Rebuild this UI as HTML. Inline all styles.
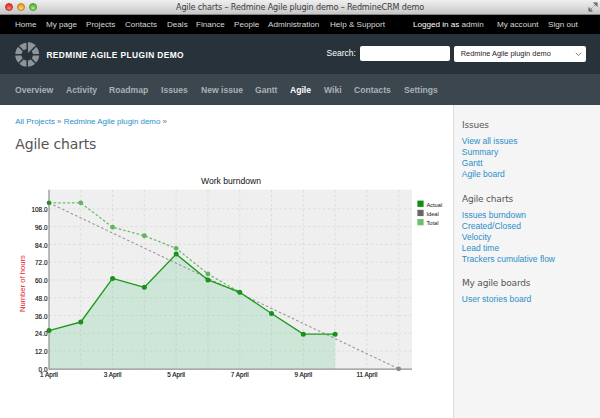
<!DOCTYPE html>
<html><head><meta charset="utf-8"><title>Agile charts – Redmine Agile plugin demo – RedmineCRM demo</title>
<style>
*{box-sizing:border-box;margin:0;padding:0}
html,body{width:600px;height:418px;overflow:hidden;background:#fff;font-family:"Liberation Sans",sans-serif;}
#titlebar{position:absolute;left:0;top:0;width:600px;height:15px;background:linear-gradient(#efefef,#dedede 45%,#c6c6c6);border-bottom:1px solid #858585;border-radius:2.5px 2.5px 0 0;}
#titlebar .t{position:absolute;left:0;width:600px;top:1.3px;text-align:center;font-family:"DejaVu Sans","Liberation Sans",sans-serif;font-size:8.1px;letter-spacing:-0.16px;color:#3c3c3c;line-height:13px;}
.tl{position:absolute;top:3px;width:8px;height:8px;border-radius:50%;}
#topmenu{position:absolute;left:0;top:15px;width:600px;height:19px;background:#000;color:#fff;font-size:8.1px;line-height:19px;}
#topmenu a{position:absolute;color:#d8d8d8;text-decoration:none;white-space:nowrap}
#header{position:absolute;left:0;top:34px;width:600px;height:40px;background:#28323a;}
#header h1{position:absolute;left:46.4px;top:14px;font-size:8.4px;font-weight:bold;color:#fff;letter-spacing:0.4px;line-height:14px;white-space:nowrap}
#mainmenu{position:absolute;left:0;top:74px;width:600px;height:31px;padding-top:1px;background:#3b464e;font-size:8.6px;font-weight:bold;line-height:30px;}
#mainmenu a{position:absolute;color:#a9b1b7;white-space:nowrap}
#mainmenu a.sel{color:#fff}
#sidebar{position:absolute;left:453px;top:105px;width:147px;height:313px;background:#f5f5f5;border-left:1px solid #dcdcdc;}
#sidebar h3{position:absolute;left:8px;font-family:"DejaVu Sans","Liberation Sans",sans-serif;font-weight:normal;font-size:9px;letter-spacing:-0.2px;color:#555;line-height:12px;white-space:nowrap}
#sidebar a{position:absolute;left:7.8px;font-size:8.5px;color:#2a8fc9;line-height:11px;white-space:nowrap}
#content{position:absolute;left:0;top:105px;width:453px;height:313px;}
.bc{position:absolute;left:15.2px;top:11px;font-size:7.95px;color:#2a8fc9;line-height:12px;white-space:nowrap}
.bc span{color:#777}
h2{position:absolute;left:15.3px;top:28.6px;font-family:"DejaVu Sans","Liberation Sans",sans-serif;font-weight:normal;font-size:14px;letter-spacing:-0.18px;color:#555;line-height:20px;white-space:nowrap}
</style></head><body>
<div id="titlebar">
<div class="tl" style="left:5px;background:radial-gradient(circle at 50% 75%,#ff8a80 0%,#e8443c 55%,#c9302a 100%);border:0.5px solid #b6312c"></div>
<div class="tl" style="left:17px;background:radial-gradient(circle at 50% 75%,#ffd77a 0%,#eeab35 55%,#d28f22 100%);border:0.5px solid #b98527"></div>
<div class="tl" style="left:29px;background:radial-gradient(circle at 50% 75%,#b5ea95 0%,#6cc04a 55%,#4da332 100%);border:0.5px solid #4a9833"></div>
<svg style="position:absolute;left:588px;top:2px" width="10" height="10" viewBox="0 0 10 10"><path d="M5.6 0.8H9.2V4.4ZM0.8 5.6V9.2H4.4ZM7.8 2.2L5.6 4.4M2.2 7.8L4.4 5.6" fill="#707070" stroke="#707070" stroke-width="0.8"/></svg>
<div class="t">Agile charts – Redmine Agile plugin demo – RedmineCRM demo</div>
</div>
<div id="topmenu">
<a style="left:15px">Home</a><a style="left:46px">My page</a><a style="left:86px">Projects</a><a style="left:125px">Contacts</a><a style="left:167px">Deals</a><a style="left:196px">Finance</a><a style="left:234px">People</a><a style="left:268px">Administration</a><a style="left:330px">Help &amp; Support</a>
<a style="left:413px;color:#fff">Logged in as <span style="color:#d8d8d8">admin</span></a><a style="left:497px">My account</a><a style="left:548px">Sign out</a>
</div>
<div id="header">
<svg style="position:absolute;left:15.4px;top:7.2px" width="28" height="28" viewBox="0 0 28 28"><circle cx="12.2" cy="13.8" r="8.9" fill="none" stroke="#8d949a" stroke-width="6.2"/><path d="M12.65 12.69L12.20 0.90A12.9 12.9 0 0 1 21.32 4.68Z" fill="#8d949a"/><path d="M12.20 13.80L12.20 -1.20M12.20 13.80L22.81 3.19M12.20 13.80L27.20 13.80M12.20 13.80L22.81 24.41M12.20 13.80L12.20 28.80M12.20 13.80L1.59 24.41M12.20 13.80L-2.80 13.80M12.20 13.80L1.59 3.19" stroke="#28323a" stroke-width="1.5" fill="none"/><circle cx="12.2" cy="13.8" r="1.2" fill="#28323a"/></svg>
<h1>REDMINE AGILE PLUGIN DEMO</h1>
<div style="position:absolute;left:326.6px;top:11.6px;font-size:8.5px;color:#fff;line-height:14px">Search:</div>
<div style="position:absolute;left:360px;top:11.6px;width:89.8px;height:15.8px;background:#fff;border-radius:2px"></div>
<div style="position:absolute;left:454.2px;top:11.5px;width:132px;height:16.2px;background:#fff;border-radius:2px;font-size:7.4px;line-height:16.2px;color:#222;padding-left:6.6px">Redmine Agile plugin demo<svg style="position:absolute;left:121px;top:6.2px" width="7" height="5" viewBox="0 0 7 5"><path d="M0.8 0.8L3.5 3.6L6.2 0.8" fill="none" stroke="#777" stroke-width="0.9"/></svg></div>
</div>
<div id="mainmenu">
<a style="left:15px">Overview</a><a style="left:66px">Activity</a><a style="left:109px">Roadmap</a><a style="left:161px">Issues</a><a style="left:201px">New issue</a><a style="left:255px">Gantt</a><a class="sel" style="left:290px">Agile</a><a style="left:324px">Wiki</a><a style="left:354px">Contacts</a><a style="left:404px">Settings</a>
</div>
<div id="content" style="top:0;height:418px">
<svg id="chart" style="position:absolute;left:0;top:0" width="453" height="418" viewBox="0 0 453 418" font-family="Liberation Sans, sans-serif">
<rect x="49.0" y="189.7" width="363.0" height="179.10000000000002" fill="#efefef"/>
<path d="M80.79 189.7V368.8M112.58 189.7V368.8M144.37 189.7V368.8M176.16 189.7V368.8M207.95 189.7V368.8M239.74 189.7V368.8M271.53 189.7V368.8M303.32 189.7V368.8M335.11 189.7V368.8M366.9 189.7V368.8M398.69 189.7V368.8M49.0 351.02H412.0M49.0 333.24H412.0M49.0 315.46H412.0M49.0 297.68H412.0M49.0 279.9H412.0M49.0 262.12H412.0M49.0 244.34H412.0M49.0 226.56H412.0M49.0 208.78H412.0" stroke="#d6d6d6" stroke-width="0.7" stroke-dasharray="2.4 2.4" fill="none"/>
<polygon points="49.0,368.8 49.0,330.57 80.79,321.98 112.58,278.42 144.37,287.31 176.16,254.12 207.95,279.9 239.74,292.2 271.53,313.53 303.32,334.13 335.11,334.13 335.11,368.8" fill="#28be64" fill-opacity="0.17"/>
<path d="M49.0 189.7V369.1H412.0" stroke="#909090" stroke-width="1.2" fill="none"/>
<path d="M49.0 202.85L398.69 368.8" stroke="#999" stroke-width="1.1" stroke-dasharray="2.6 2.2" fill="none"/>
<circle cx="398.69" cy="368.8" r="2.4" fill="#8a8a8a"/>
<polyline points="49.0,202.85 80.79,202.85 112.58,227.15 144.37,235.75 176.16,248.34 207.95,273.97 239.74,292.2" stroke="#6cbd6c" stroke-width="1.3" stroke-dasharray="2.6 2" fill="none"/>
<circle cx="49.0" cy="202.85" r="2.4" fill="#5fb55f"/>
<circle cx="80.79" cy="202.85" r="2.4" fill="#5fb55f"/>
<circle cx="112.58" cy="227.15" r="2.4" fill="#5fb55f"/>
<circle cx="144.37" cy="235.75" r="2.4" fill="#5fb55f"/>
<circle cx="176.16" cy="248.34" r="2.4" fill="#5fb55f"/>
<circle cx="207.95" cy="273.97" r="2.4" fill="#5fb55f"/>
<polyline points="49.0,330.57 80.79,321.98 112.58,278.42 144.37,287.31 176.16,254.12 207.95,279.9 239.74,292.2 271.53,313.53 303.32,334.13 335.11,334.13" stroke="#1f9a1f" stroke-width="1.35" fill="none" stroke-linejoin="round"/>
<circle cx="49.0" cy="330.57" r="2.5" fill="#189318"/>
<circle cx="80.79" cy="321.98" r="2.5" fill="#189318"/>
<circle cx="112.58" cy="278.42" r="2.5" fill="#189318"/>
<circle cx="144.37" cy="287.31" r="2.5" fill="#189318"/>
<circle cx="176.16" cy="254.12" r="2.5" fill="#189318"/>
<circle cx="207.95" cy="279.9" r="2.5" fill="#189318"/>
<circle cx="239.74" cy="292.2" r="2.5" fill="#189318"/>
<circle cx="271.53" cy="313.53" r="2.5" fill="#189318"/>
<circle cx="303.32" cy="334.13" r="2.5" fill="#189318"/>
<circle cx="335.11" cy="334.13" r="2.5" fill="#189318"/>
<circle cx="49.0" cy="202.85" r="2.2" fill="#2a8f2a"/>
<text x="47.5" y="372.0" font-size="6.4" text-anchor="end" fill="#111" stroke="#111" stroke-width="0.15">0.0</text>
<text x="47.5" y="354.21999999999997" font-size="6.4" text-anchor="end" fill="#111" stroke="#111" stroke-width="0.15">12.0</text>
<text x="47.5" y="336.44" font-size="6.4" text-anchor="end" fill="#111" stroke="#111" stroke-width="0.15">24.0</text>
<text x="47.5" y="318.65999999999997" font-size="6.4" text-anchor="end" fill="#111" stroke="#111" stroke-width="0.15">36.0</text>
<text x="47.5" y="300.88" font-size="6.4" text-anchor="end" fill="#111" stroke="#111" stroke-width="0.15">48.0</text>
<text x="47.5" y="283.09999999999997" font-size="6.4" text-anchor="end" fill="#111" stroke="#111" stroke-width="0.15">60.0</text>
<text x="47.5" y="265.32" font-size="6.4" text-anchor="end" fill="#111" stroke="#111" stroke-width="0.15">72.0</text>
<text x="47.5" y="247.54" font-size="6.4" text-anchor="end" fill="#111" stroke="#111" stroke-width="0.15">84.0</text>
<text x="47.5" y="229.76" font-size="6.4" text-anchor="end" fill="#111" stroke="#111" stroke-width="0.15">96.0</text>
<text x="47.5" y="211.98" font-size="6.4" text-anchor="end" fill="#111" stroke="#111" stroke-width="0.15">108.0</text>
<text x="49.0" y="377.2" font-size="6.4" text-anchor="middle" fill="#111" stroke="#111" stroke-width="0.15">1 April</text>
<text x="112.58" y="377.2" font-size="6.4" text-anchor="middle" fill="#111" stroke="#111" stroke-width="0.15">3 April</text>
<text x="176.16" y="377.2" font-size="6.4" text-anchor="middle" fill="#111" stroke="#111" stroke-width="0.15">5 April</text>
<text x="239.74" y="377.2" font-size="6.4" text-anchor="middle" fill="#111" stroke="#111" stroke-width="0.15">7 April</text>
<text x="303.32" y="377.2" font-size="6.4" text-anchor="middle" fill="#111" stroke="#111" stroke-width="0.15">9 April</text>
<text x="366.9" y="377.2" font-size="6.4" text-anchor="middle" fill="#111" stroke="#111" stroke-width="0.15">11 April</text>
<text x="231" y="184.2" font-size="8.6" text-anchor="middle" fill="#111">Work burndown</text>
<text transform="translate(25.2 283.6) rotate(-90)" font-size="7.65" text-anchor="middle" fill="#e8262a">Number of hours</text>
<rect x="417.4" y="200.6" width="6.2" height="6.3" fill="#0e8f0e"/>
<text x="426.4" y="206.9" font-size="5.7" fill="#111">Actual</text>
<rect x="417.4" y="209.79999999999998" width="6.2" height="6.3" fill="#666"/>
<text x="426.4" y="216.1" font-size="5.7" fill="#111">Ideal</text>
<rect x="417.4" y="219.0" width="6.2" height="6.3" fill="#6dbf6d"/>
<text x="426.4" y="225.3" font-size="5.7" fill="#111">Total</text>
</svg>
<div style="position:absolute;left:0;top:105px">
<div class="bc">All Projects <span>»</span> Redmine Agile plugin demo <span>»</span></div>
<h2>Agile charts</h2>
</div></div>
<div id="sidebar">
<h3 style="top:13.8px">Issues</h3>
<a style="top:30.65px">View all issues</a><a style="top:41.65px">Summary</a><a style="top:52.65px">Gantt</a><a style="top:63.65px">Agile board</a>
<h3 style="top:87.5px">Agile charts</h3>
<a style="top:104.65px">Issues burndown</a><a style="top:115.65px">Created/Closed</a><a style="top:126.65px">Velocity</a><a style="top:137.65px">Lead time</a><a style="top:148.65px">Trackers cumulative flow</a>
<h3 style="top:172.2px">My agile boards</h3>
<a style="top:189.2px">User stories board</a>
</div>
</body></html>
